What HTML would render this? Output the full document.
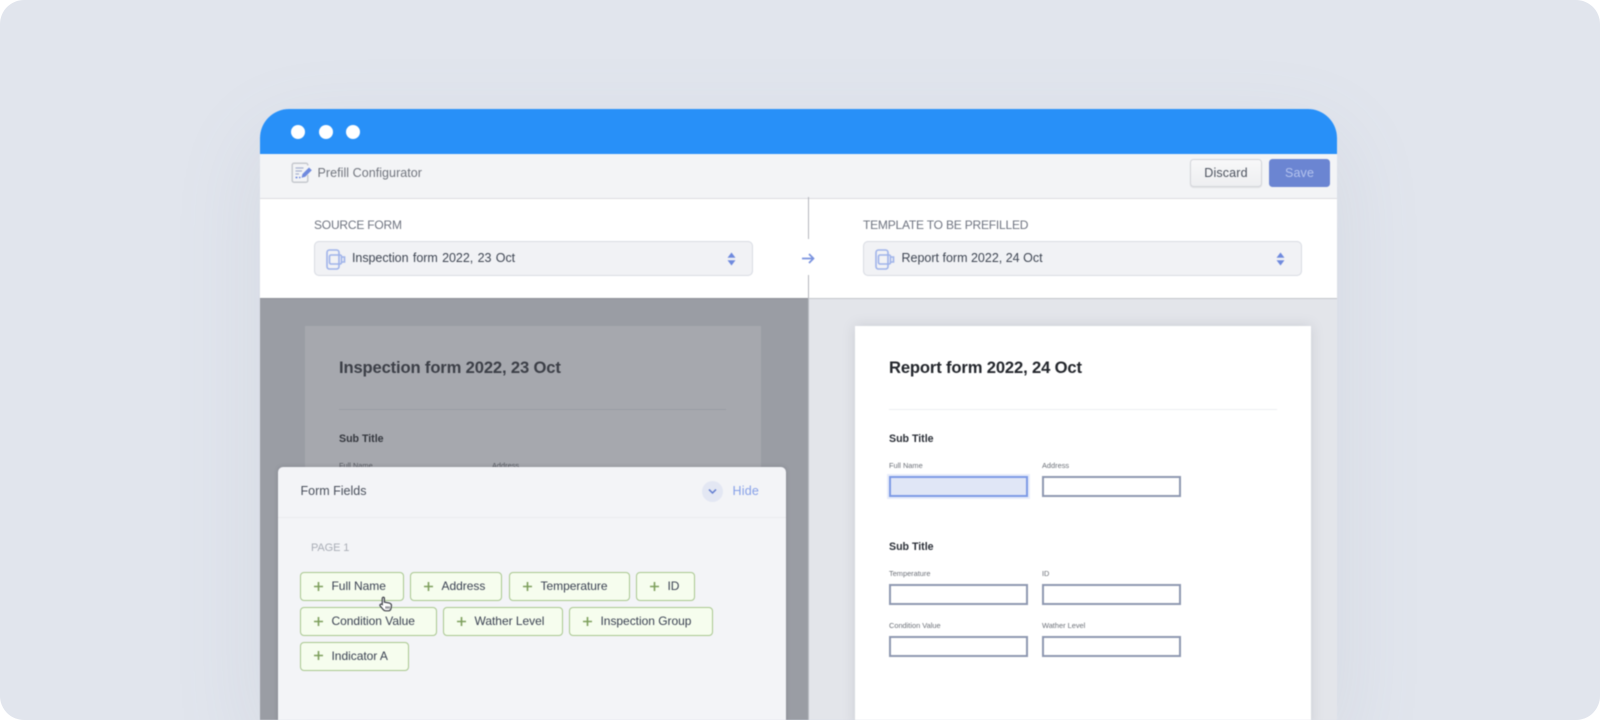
<!DOCTYPE html>
<html><head><meta charset="utf-8">
<style>
*{box-sizing:border-box;margin:0;padding:0}
html,body{width:1600px;height:720px;overflow:hidden;background:#fff}
body{font-family:"Liberation Sans",sans-serif;position:relative}
.a{position:absolute}
#bg{left:0;top:0;width:1600px;height:720px;background:#e1e5ed;border-radius:24px;overflow:hidden;}
#win{left:260px;top:109px;width:1077px;height:611px;border-radius:29px 29px 0 0;overflow:hidden;background:#fff;box-shadow:0 30px 90px rgba(120,130,155,.12);filter:blur(.5px)}
.t{position:absolute;white-space:nowrap;line-height:1}
.sel{position:absolute;top:132px;height:35px;width:439px;background:#f1f2f5;border:1.5px solid #d8dbe3;border-radius:5px}
.lab{position:absolute;top:109.5px;font-size:12px;color:#6f7480;letter-spacing:-.2px;white-space:nowrap;line-height:12px}
.paper{position:absolute;top:217px;width:456px;height:400px}
.ttl{position:absolute;left:34px;top:32px;font:bold 16.6px "Liberation Sans",sans-serif;letter-spacing:-.15px;white-space:nowrap;line-height:19px}
.sub{position:absolute;left:34px;font:bold 10.6px "Liberation Sans",sans-serif;letter-spacing:0;white-space:nowrap;line-height:12px;color:#2c3038}
.fl{position:absolute;font-size:7.4px;color:#6c7078;white-space:nowrap;line-height:9px}
.inp{position:absolute;width:139px;height:21px;border:2px solid #8e98b1;background:#fff}
.chip{position:absolute;height:29px;background:#f6fdee;border:1.5px solid #a9c78f;border-radius:4px;font-size:12px;color:#3a4152;letter-spacing:-.03px;line-height:27px;white-space:nowrap;padding-left:30.5px}
.chip svg{position:absolute;left:11.500px;top:7.500px}
</style></head><body>
<div id="bg" class="a"></div>
<div id="win" class="a">
  <!-- title bar -->
  <div class="a" style="left:0;top:0;width:1077px;height:45px;background:#2890f8"></div>
  <div class="a" style="left:31px;top:16px;width:14px;height:14px;border-radius:50%;background:#fff"></div>
  <div class="a" style="left:58.500px;top:16px;width:14px;height:14px;border-radius:50%;background:#fff"></div>
  <div class="a" style="left:86px;top:16px;width:14px;height:14px;border-radius:50%;background:#fff"></div>
  <!-- toolbar -->
  <div class="a" style="left:0;top:45px;width:1077px;height:44.500px;background:#f3f4f6;border-bottom:1.5px solid #dcdde0"></div>
  <svg class="a" style="left:30.500px;top:53px" width="22" height="22" viewBox="0 0 22 22" fill="none">
    <path d="M16.800 3.500V3C16.800 2 16 1.200 15 1.200H3C2 1.200 1.200 2 1.200 3V18.500C1.200 19.500 2 20.300 3 20.300H15C16 20.300 16.800 19.500 16.800 18.500V13" stroke="#c6c9cf" stroke-width="1.500"/>
    <path d="M4.500 6H12.500M4.500 9H11M4.500 12H8" stroke="#a8b2cf" stroke-width="1.300"/>
    <path d="M4.500 15.500H6.500M8 15.500H9.500" stroke="#6f8ade" stroke-width="1.400"/>
    <path d="M10.500 15.800L11.500 12L18 5.500L20.800 8.200L14.200 14.800Z" fill="#6f8ade"/>
  </svg>
  <div class="t" style="left:57.500px;top:58px;font-size:12.500px;color:#71757e;letter-spacing:.05px">Prefill Configurator</div>
  <div class="a" style="left:930px;top:50px;width:72px;height:28px;background:linear-gradient(#f8f8f9,#eeeff1);border:1.500px solid #d3d5da;border-radius:3.500px;box-shadow:0 1px 1px rgba(0,0,0,.08);text-align:center;font-size:12.500px;line-height:26.500px;color:#4c525e;letter-spacing:.15px">Discard</div>
  <div class="a" style="left:1009px;top:50px;width:61px;height:28px;background:#6b85d2;border-radius:3.500px;text-align:center;font-size:12.500px;line-height:29px;color:#b4c3ee;letter-spacing:.15px">Save</div>

  <!-- source strip -->
  <div class="a" style="left:547.500px;top:88px;width:1.500px;height:42px;background:#b3b6bd"></div>
  <div class="a" style="left:547.500px;top:166px;width:1.500px;height:24px;background:#b3b6bd"></div>
  <div class="lab" style="left:54px">SOURCE FORM</div>
  <div class="lab" style="left:603px">TEMPLATE TO BE PREFILLED</div>

  <div class="sel" style="left:54px">
    <svg class="a" style="left:11px;top:6.500px" width="20" height="21" viewBox="0 0 20 21" fill="none" stroke="#9fb3ea" stroke-width="1.600"><rect x="1" y="1" width="12" height="19" rx="2.500"/><rect x="3.500" y="6" width="12" height="9" rx="1.500"/><path d="M15.500 8H18.500V13H15.500"/></svg>
    <div class="t" style="left:37px;top:9.500px;font-size:12.500px;color:#3f4653;letter-spacing:-.05px;word-spacing:1px">Inspection form 2022, 23 Oct</div>
    <svg class="a" style="left:411.500px;top:9.500px" width="9" height="14" viewBox="0 0 9 14"><path d="M4.500 0.500L8.500 5.800H.5ZM4.500 13.500L8.500 8.200H.5Z" fill="#6f8ade"/></svg>
  </div>
  <div class="sel" style="left:603px">
    <svg class="a" style="left:11px;top:6.500px" width="20" height="21" viewBox="0 0 20 21" fill="none" stroke="#9fb3ea" stroke-width="1.600"><rect x="1" y="1" width="12" height="19" rx="2.500"/><rect x="3.500" y="6" width="12" height="9" rx="1.500"/><path d="M15.500 8H18.500V13H15.500"/></svg>
    <div class="t" style="left:37.500px;top:9.500px;font-size:12.500px;color:#3f4653;letter-spacing:0">Report form 2022, 24 Oct</div>
    <svg class="a" style="left:411.500px;top:9.500px" width="9" height="14" viewBox="0 0 9 14"><path d="M4.500 0.500L8.500 5.800H.5ZM4.500 13.500L8.500 8.200H.5Z" fill="#6f8ade"/></svg>
  </div>
  <svg class="a" style="left:541px;top:143px" width="14" height="13" viewBox="0 0 14 13" fill="none" stroke="#7a93df" stroke-width="1.700"><path d="M1 6.500H12.500M8 2L12.500 6.500L8 11"/></svg>

  <!-- lower panels -->
  <div class="a" style="left:0;top:188.500px;width:547.500px;height:423px;background:#9a9da4;border-top:1.500px solid #8d9097"></div>
  <div class="a" style="left:547.500px;top:188.500px;width:529.500px;height:423px;background:#e3e5ea;border-left:1.500px solid #b9bcc3;border-top:1.500px solid #c4c6cb"></div>

  <div class="paper" style="left:45px;background:#a6a8ae;color:#3c3f46">
    <div class="ttl" style="color:#3c3f47">Inspection form 2022, 23 Oct</div>
    <div class="a" style="left:34px;top:83px;width:387px;height:1px;background:#999ca3"></div>
    <div class="sub" style="top:106.500px;color:#35383f">Sub Title</div>
    <div class="fl" style="left:34px;top:135px;color:#55585f">Full Name</div>
    <div class="fl" style="left:187px;top:135px;color:#55585f">Address</div>
  </div>

  <div class="paper" style="left:595px;background:#fff;box-shadow:0 0 12px rgba(90,95,110,.18);color:#222">
    <div class="ttl" style="color:#23262c">Report form 2022, 24 Oct</div>
    <div class="a" style="left:34px;top:83px;width:388px;height:1px;background:#eceef1"></div>
    <div class="sub" style="top:106.500px">Sub Title</div>
    <div class="fl" style="left:34px;top:135px">Full Name</div>
    <div class="fl" style="left:187px;top:135px">Address</div>
    <div class="inp" style="left:34px;top:149.500px;background:#e0e6f6;border-color:#7d9ae6;box-shadow:0 0 0 2px #e8edfa"></div>
    <div class="inp" style="left:187px;top:149.500px"></div>
    <div class="sub" style="top:215px">Sub Title</div>
    <div class="fl" style="left:34px;top:243px">Temperature</div>
    <div class="fl" style="left:187px;top:243px">ID</div>
    <div class="inp" style="left:34px;top:258px"></div>
    <div class="inp" style="left:187px;top:258px"></div>
    <div class="fl" style="left:34px;top:295px">Condition Value</div>
    <div class="fl" style="left:187px;top:295px">Wather Level</div>
    <div class="inp" style="left:34px;top:310px"></div>
    <div class="inp" style="left:187px;top:310px"></div>
  </div>

  <!-- form fields drawer -->
  <div class="a" style="left:17.500px;top:358px;width:508px;height:260px;background:#f3f4f7;border-radius:5px 5px 0 0;box-shadow:0 0 4px rgba(60,65,75,.25)">
    <div class="a" style="left:0;top:50px;width:508px;height:1px;background:#eaebef"></div>
    <div class="t" style="left:23px;top:17.500px;font-size:12.500px;color:#4a505c;letter-spacing:0">Form Fields</div>
    <div class="a" style="left:424px;top:13.500px;width:21px;height:21px;border-radius:50%;background:#e3e7f3"></div>
    <svg class="a" style="left:430px;top:21px" width="9" height="7" viewBox="0 0 9 7" fill="none" stroke="#5f7bd0" stroke-width="1.500"><path d="M1 1.500L4.500 5L8 1.500"/></svg>
    <div class="t" style="left:455px;top:17.500px;font-size:12.500px;color:#86a0e8;letter-spacing:.2px">Hide</div>
    <div class="t" style="left:33.500px;top:76px;font-size:11px;color:#a9adb6;letter-spacing:-.1px">PAGE 1</div>

    <div class="chip" style="left:22.500px;top:105px;width:104px">Full Name<svg width="11" height="11" viewBox="0 0 11 11"><path d="M5.500 1V10M1 5.500H10" stroke="#7d9f5c" stroke-width="1.600"/></svg></div>
    <div class="chip" style="left:132.500px;top:105px;width:92px">Address<svg width="11" height="11" viewBox="0 0 11 11"><path d="M5.500 1V10M1 5.500H10" stroke="#7d9f5c" stroke-width="1.600"/></svg></div>
    <div class="chip" style="left:231.500px;top:105px;width:121px">Temperature<svg width="11" height="11" viewBox="0 0 11 11"><path d="M5.500 1V10M1 5.500H10" stroke="#7d9f5c" stroke-width="1.600"/></svg></div>
    <div class="chip" style="left:358.500px;top:105px;width:58.500px">ID<svg width="11" height="11" viewBox="0 0 11 11"><path d="M5.500 1V10M1 5.500H10" stroke="#7d9f5c" stroke-width="1.600"/></svg></div>
    <div class="chip" style="left:22.500px;top:140px;width:137px">Condition Value<svg width="11" height="11" viewBox="0 0 11 11"><path d="M5.500 1V10M1 5.500H10" stroke="#7d9f5c" stroke-width="1.600"/></svg></div>
    <div class="chip" style="left:165.500px;top:140px;width:120px">Wather Level<svg width="11" height="11" viewBox="0 0 11 11"><path d="M5.500 1V10M1 5.500H10" stroke="#7d9f5c" stroke-width="1.600"/></svg></div>
    <div class="chip" style="left:291.500px;top:140px;width:144px">Inspection Group<svg width="11" height="11" viewBox="0 0 11 11"><path d="M5.500 1V10M1 5.500H10" stroke="#7d9f5c" stroke-width="1.600"/></svg></div>
    <div class="chip" style="left:22.500px;top:174.500px;width:109px">Indicator A<svg width="11" height="11" viewBox="0 0 11 11"><path d="M5.500 1V10M1 5.500H10" stroke="#7d9f5c" stroke-width="1.600"/></svg></div>

    <svg class="a" style="left:101.500px;top:129px" width="14" height="16" viewBox="0 0 15 17"><path d="M3.500 9V2.500C3.500 0.800 5.800 0.800 5.800 2.500V6.500L11 7.500C12.800 8 13.500 9 13.300 10.500L12.800 13.500C12.500 15 11.500 15.800 10 15.800H7C5.800 15.800 5 15.200 4.300 14.200L1.200 10.500C0.300 9.200 2 8 3.500 9Z" fill="#fff" stroke="#3d4047" stroke-width="1.300"/><path d="M7.500 11V13.500M9.200 11V13.500M10.900 11V13.500" stroke="#3d4047" stroke-width=".9"/></svg>
  </div>
</div>
</body></html>
